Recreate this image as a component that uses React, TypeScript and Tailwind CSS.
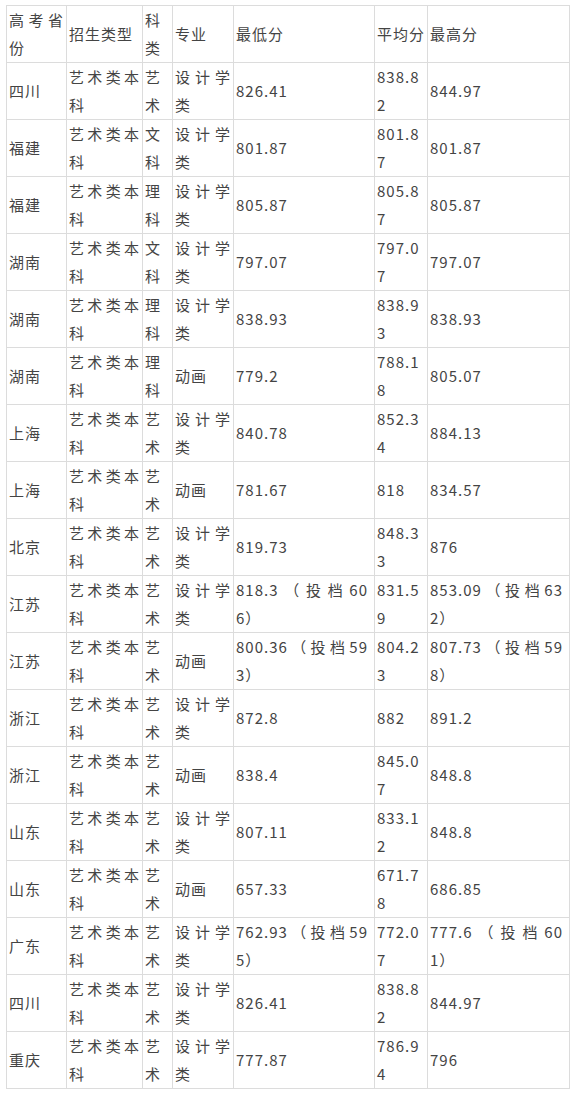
const rows: string[][] = [
  ["四川", "艺术类本科", "艺术", "设计学类", "826.41", "838.82", "844.97"],
  ["福建", "艺术类本科", "文科", "设计学类", "801.87", "801.87", "801.87"],
  ["福建", "艺术类本科", "理科", "设计学类", "805.87", "805.87", "805.87"],
  ["湖南", "艺术类本科", "文科", "设计学类", "797.07", "797.07", "797.07"],
  ["湖南", "艺术类本科", "理科", "设计学类", "838.93", "838.93", "838.93"],
  ["湖南", "艺术类本科", "理科", "动画", "779.2", "788.18", "805.07"],
  ["上海", "艺术类本科", "艺术", "设计学类", "840.78", "852.34", "884.13"],
  ["上海", "艺术类本科", "艺术", "动画", "781.67", "818", "834.57"],
  ["北京", "艺术类本科", "艺术", "设计学类", "819.73", "848.33", "876"],
  ["江苏", "艺术类本科", "艺术", "设计学类", "818.3（投档606）", "831.59", "853.09（投档632）"],
  ["江苏", "艺术类本科", "艺术", "动画", "800.36（投档593）", "804.23", "807.73（投档598）"],
  ["浙江", "艺术类本科", "艺术", "设计学类", "872.8", "882", "891.2"],
  ["浙江", "艺术类本科", "艺术", "动画", "838.4", "845.07", "848.8"],
  ["山东", "艺术类本科", "艺术", "设计学类", "807.11", "833.12", "848.8"],
  ["山东", "艺术类本科", "艺术", "动画", "657.33", "671.78", "686.85"],
  ["广东", "艺术类本科", "艺术", "设计学类", "762.93（投档595）", "772.07", "777.6（投档601）"],
  ["四川", "艺术类本科", "艺术", "设计学类", "826.41", "838.82", "844.97"],
  ["重庆", "艺术类本科", "艺术", "设计学类", "777.87", "786.94", "796"],
];

const head = ["高考省份", "招生类型", "科类", "专业", "最低分", "平均分", "最高分"];
const widths = ["w-[60px]", "w-[76px]", "w-[30px]", "w-[61px]", "w-[141px]", "w-[53px]", "w-[142px]"];
// the two wide score columns wrap a little earlier in the original
const pads = ["pr-[2px]", "pr-[2px]", "pr-[2px]", "pr-[2px]", "pr-[6px]", "pr-[2px]", "pr-[6px]"];

const cell =
  "border border-[#dcdcdc] pl-[2px] py-0 align-middle text-justify break-all leading-[28px] h-[57px] [text-spacing-trim:space-all]";

export default function App() {
  return (
    <div
      className="min-h-screen bg-white pt-[5px] pl-[6px] text-[15px] tracking-[1px] text-[#444]"
      style={{ fontFamily: '"Noto Sans CJK SC", "Noto Sans", sans-serif' }}
    >
      <table className="table-fixed border-collapse w-[564px]">
        <colgroup>
          {widths.map((w, i) => (
            <col key={i} className={w} />
          ))}
        </colgroup>
        <thead>
          <tr>
            {head.map((h, i) => (
              <th key={i} className={`${cell} ${pads[i]} font-normal`}>
                {h}
              </th>
            ))}
          </tr>
        </thead>
        <tbody>
          {rows.map((r, i) => (
            <tr key={i}>
              {r.map((c, j) => (
                <td key={j} className={`${cell} ${pads[j]}`}>
                  {c}
                </td>
              ))}
            </tr>
          ))}
        </tbody>
      </table>
    </div>
  );
}
